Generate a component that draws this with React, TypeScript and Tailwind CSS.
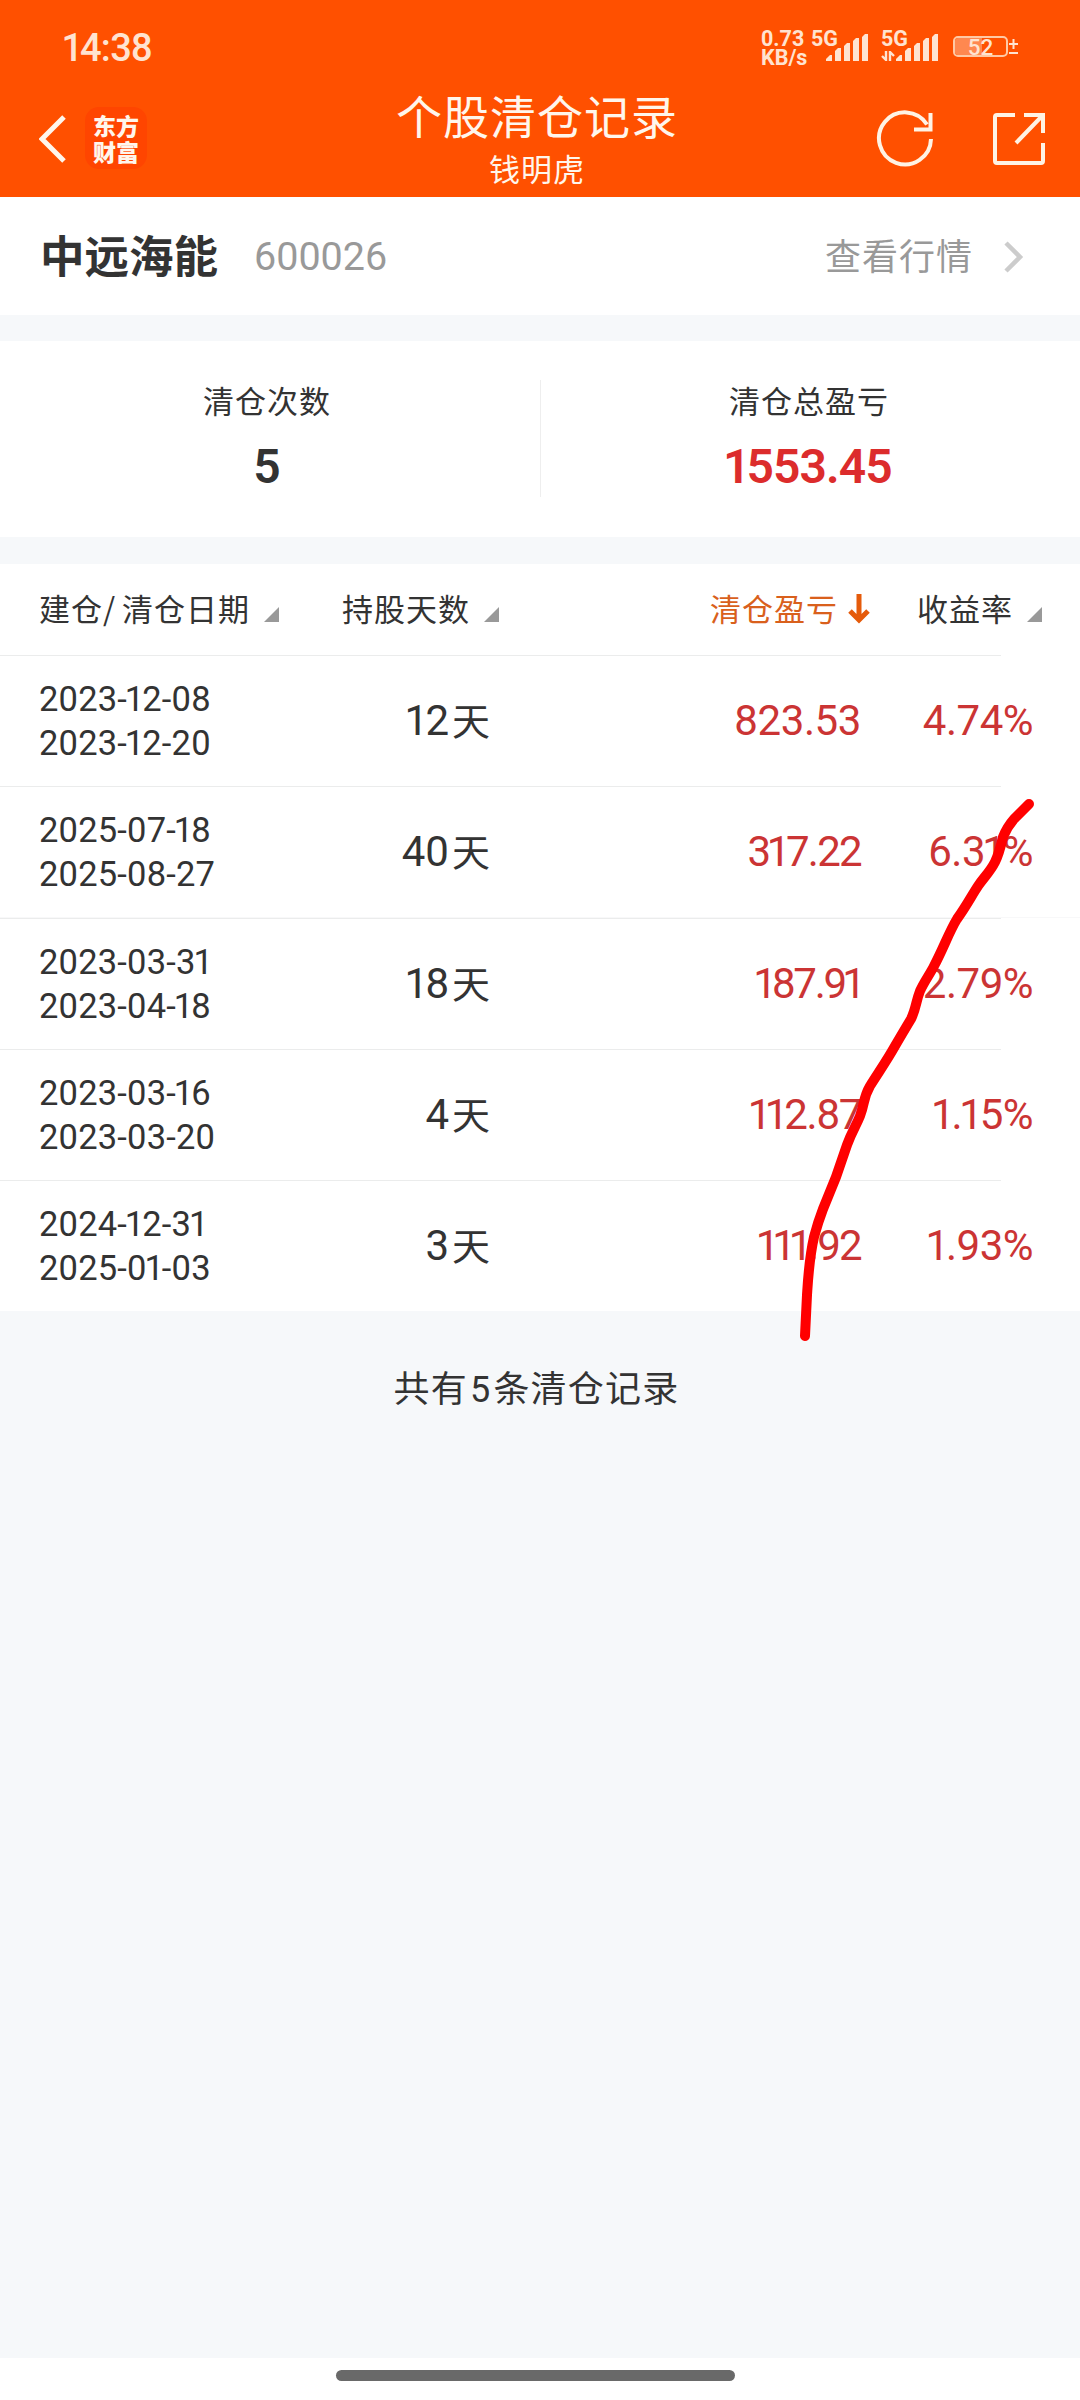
const records = [
  { open: "2023-12-08", close: "2023-12-20", days: "12", profit: "823.53", rate: "4.74%", spacing: "tracking-[-0.4px]" },
  { open: "2025-07-18", close: "2025-08-27", days: "40", profit: "317.22", rate: "6.31%", spacing: "tracking-[-1.700px]" },
  { open: "2023-03-31", close: "2023-04-18", days: "18", profit: "187.91", rate: "2.79%", spacing: "tracking-[-2.200px]" },
  { open: "2023-03-16", close: "2023-03-20", days: "4", profit: "112.87", rate: "1.15%", spacing: "tracking-[-1.300px]" },
  { open: "2024-12-31", close: "2025-01-03", days: "3", profit: "111.92", rate: "1.93%", spacing: "tracking-[-1.700px]" },
];

// Roboto digits are tabular, pull the ones in so they sit proportionally
function Num({ text }: { text: string }) {
  return (
    <>
      {text.split(/(1)/).map((part, i) =>
        part === "1" ? (
          <span key={i} className="mx-[-0.065em]">1</span>
        ) : (
          part
        )
      )}
    </>
  );
}

function Signal() {
  return (
    <svg width="43" height="28" viewBox="0 0 43 28" fill="#ffe3d0">
      <path d="M0 27v-2l4-4h2v6z" />
      <path d="M9 27V17l3-3h3v13z" />
      <path d="M18 27V12l3-3h3v18z" />
      <path d="M27 27V7l3-3h3v23z" />
      <path d="M36 27V3l3-3h3v27z" />
    </svg>
  );
}

function StatusBar() {
  return (
    <div className="flex h-[80px] items-start font-[Roboto,sans-serif] text-[#ffe3d0]">
      <div className="ml-[64px] mt-[29px] text-[38px] font-medium leading-[38px] tracking-[-0.700px]">
        <Num text="14:38" />
      </div>
      <div className="ml-auto mt-[29px] w-[50px] text-[21.500px] font-bold leading-[19px]">
        <div>0.73</div>
        <div>KB/s</div>
      </div>
      <div className="mt-[29px] w-[70px] text-[21.500px] font-bold leading-[19px]">
        <div>5G</div>
        <div className="-mt-[14px] ml-[15px]">
          <Signal />
        </div>
      </div>
      <div className="mt-[29px] w-[72px] text-[21.500px] font-bold leading-[19px]">
        <div>5G</div>
        <div className="-mt-[14px] flex items-end">
          <svg className="mb-px" width="14" height="10" viewBox="0 0 14 10" fill="none" stroke="#ffe3d0" strokeWidth="2.4">
            <path d="M5 0v9L1 5M9 10V1l4 4" />
          </svg>
          <div className="ml-px">
            <Signal />
          </div>
        </div>
      </div>
      <div className="mr-[62px] mt-[36px] flex">
        <div className="relative flex h-[21px] w-[55px] items-center justify-center rounded-[5px] border-2 border-[#ffc9a5]">
          <div className="absolute bottom-0 left-0 top-0 w-[27px] rounded-l-[3px] bg-[#ff8850]" />
          <span className="relative text-[22.500px] font-medium leading-[20px]">52</span>
        </div>
        <svg className="ml-px mt-[3px]" width="9" height="15" viewBox="0 0 9 15" stroke="#ffe3d0" strokeWidth="2">
          <path d="M0 5h9M4.500 0v10M0 14h9" />
        </svg>
      </div>
    </div>
  );
}

function TopBar() {
  return (
    <div className="grid h-[117px] grid-cols-[395px_284px_1fr] text-[#fff6ec]">
      <div className="flex items-start">
        <svg className="ml-[39px] mt-[35px]" width="28" height="48" viewBox="0 0 28 48" fill="none" stroke="#fff6ec" strokeWidth="5">
          <path d="M25 2L3 24l22 22" />
        </svg>
        <div className="ml-[18px] mt-[27px] flex h-[62px] w-[62px] flex-col items-center justify-center rounded-[14px] bg-[#ff4500] text-[23px] font-black leading-[26px]">
          <div>东方</div>
          <div>财富</div>
        </div>
      </div>
      <div className="mt-[10px] flex flex-col items-center">
        <div className="whitespace-nowrap text-[46px] leading-[48px] tracking-[1px]">个股清仓记录</div>
        <div className="mt-[10px] text-[31px] leading-[40px] tracking-[1px]">钱明虎</div>
      </div>
      <div className="flex items-start">
        <svg className="ml-[197px] mt-[29px]" width="58" height="58" viewBox="0 0 58 58" fill="none" stroke="#fff3e4" strokeWidth="4">
          <path d="M55 30A26 26 0 1 1 51 15.500" />
          <path d="M54.500 4v16.500H38" />
        </svg>
        <svg className="ml-[57px] mt-[31px]" width="58" height="58" viewBox="0 0 58 58" fill="none" stroke="#fff3e4" strokeWidth="4">
          <path d="M24 4H6q-2 0-2 2v44q0 2 2 2h44q2 0 2-2V32" />
          <path d="M33 4h19v18M52 4L25 32" />
        </svg>
      </div>
    </div>
  );
}

function SortMark() {
  return (
    <svg className="ml-[14px] mt-[13px]" width="15" height="15" viewBox="0 0 15 15">
      <path d="M15 0v15H0z" fill="#999" />
    </svg>
  );
}

export default function App() {
  return (
    <div className="relative flex h-[2400px] w-[1080px] flex-col overflow-hidden bg-[#f6f8fa] font-['Noto_Sans_CJK_SC',sans-serif] text-[#333]">
      <header className="h-[197px] bg-[#ff5000]">
        <StatusBar />
        <TopBar />
      </header>

      <section className="flex h-[118px] items-center bg-white pl-[40px]">
        <h1 className="-mt-[4px] text-[44.500px] font-semibold leading-none">中远海能</h1>
        <span className="ml-[36px] mt-[2px] font-[Roboto,sans-serif] text-[39.500px] leading-none text-[#999]">600026</span>
        <span className="-mt-[4px] ml-auto text-[36px] leading-none tracking-[1px] text-[#999]">查看行情</span>
        <svg className="ml-[31px] mr-[56px] mt-[2px]" width="20" height="32" viewBox="0 0 20 32" fill="none" stroke="#ccc" strokeWidth="4.500">
          <path d="M2 2l14 14L2 30" />
        </svg>
      </section>

      <section className="mt-[26px] flex h-[196px] bg-white pt-[39px]">
        <div className="flex w-[540px] flex-col items-center pr-[6px]">
          <div className="mt-[2px] text-[31px] leading-[36px] tracking-[1px]">清仓次数</div>
          <div className="mt-[25px] font-[Roboto,sans-serif] text-[48px] font-semibold leading-[48px]">5</div>
        </div>
        <div className="h-[117px] w-px bg-[#eee]" />
        <div className="flex w-[539px] flex-col items-center pr-[3px]">
          <div className="mt-[2px] text-[31px] leading-[36px] tracking-[1px]">清仓总盈亏</div>
          <div className="mt-[25px] font-[Roboto,sans-serif] text-[48px] font-semibold leading-[48px] tracking-[-0.900px] text-[#dc2c2c]">
            <Num text="1553.45" />
          </div>
        </div>
      </section>

      <section className="mt-[27px] bg-white">
        <div className="flex h-[91px] items-center pb-[4px] text-[31px] leading-none tracking-[1px]">
          <div className="flex w-[342px] items-center pl-[39px] [word-spacing:-2px]">
            建仓/ 清仓日期
            <SortMark />
          </div>
          <div className="flex w-[368px] items-center">
            持股天数
            <SortMark />
          </div>
          <div className="flex w-[207px] items-center text-[#d9601c]">
            清仓盈亏
            <svg className="ml-[10px] mt-[2px]" width="22" height="30" viewBox="0 0 22 30" fill="none" stroke="#e55b0b" strokeWidth="5">
              <path d="M11 0v26M2 17l9 9 9-9" />
            </svg>
          </div>
          <div className="flex items-center">
            收益率
            <SortMark />
          </div>
        </div>
        {records.map((r, i) => (
          <div key={r.open}>
            {i === 2 && <div className="h-px bg-[#f8f8f9]" />}
            <div className="h-px w-[1001px] bg-[#ebecec]" />
            <div className="grid h-[130px] grid-cols-[300px_190px_371px_172px] items-center font-[Roboto,'Noto_Sans_CJK_SC',sans-serif]">
              <div className="pl-[39px] text-[34.500px] leading-[44px] tracking-[0.2px]">
                <div>
                  <Num text={r.open} />
                </div>
                <div>
                  <Num text={r.close} />
                </div>
              </div>
              <div className="text-right text-[42px] leading-none">
                <Num text={r.days} />
                <span className="ml-[3px] text-[38px]">天</span>
              </div>
              <div className={`text-right text-[42px] leading-none text-[#cb3434] ${r.spacing}`}>
                <Num text={r.profit} />
              </div>
              <div className="text-right text-[42px] leading-none tracking-[-0.5px] text-[#cb3434]">
                <Num text={r.rate} />
              </div>
            </div>
          </div>
        ))}
      </section>

      <p className="mt-[53px] pr-[7px] text-center text-[36px] leading-[44px] tracking-[1.200px]">
        共有<span className="mx-[2px] font-[Roboto,sans-serif]">5</span>条清仓记录
      </p>

      <footer className="mt-auto flex h-[42px] justify-center bg-white pr-[9px] pt-[12px]">
        <div className="h-[11px] w-[399px] rounded-full bg-[#696969]" />
      </footer>

      {/* hand-drawn marker stroke over the table */}
      <svg className="pointer-events-none absolute left-[780px] top-[780px]" width="280" height="580" viewBox="780 780 280 580" fill="none">
        <path
          d="M1029 804L1014 819Q1007 827 1003 837Q999 854 995 862C990 872 984 877 978 886C972 895 967 905 957 919C949 932 944 947 934 966C930 974 924 982 920 991C916 1001 916 1009 911 1019C905 1029 902 1034 895 1046C886 1062 878 1073 870 1086C863 1098 865 1103 860 1116C856 1126 852 1131 847 1145L836 1177L823 1209Q818 1222 814 1237C809 1259 808 1280 807 1295L805 1336"
          stroke="#f00"
          strokeWidth="10"
          strokeLinecap="round"
          strokeLinejoin="round"
        />
      </svg>
    </div>
  );
}
